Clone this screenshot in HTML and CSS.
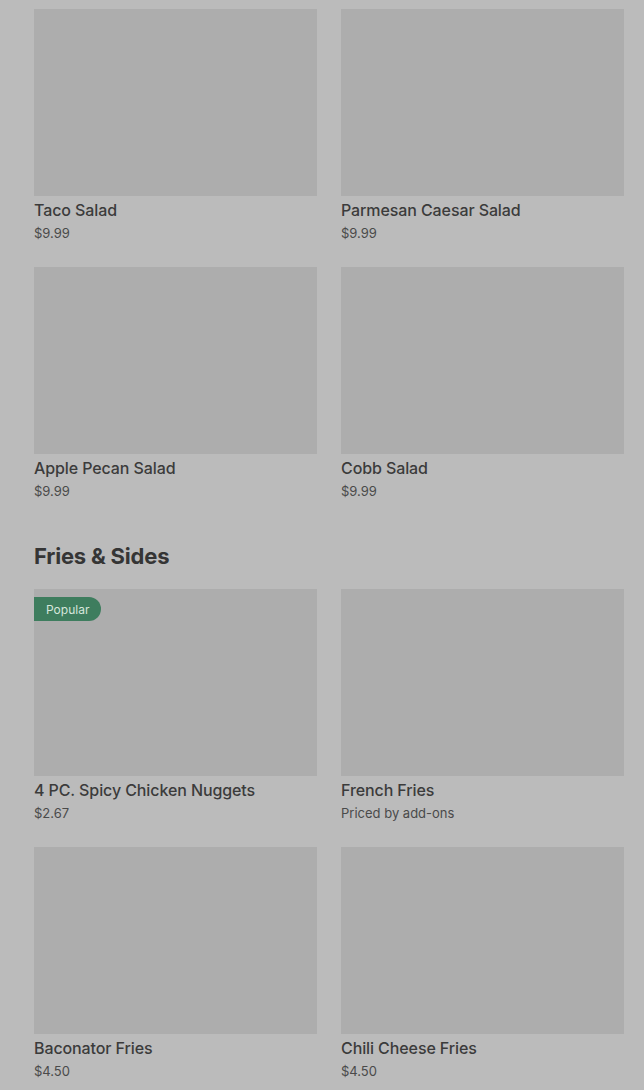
FILE: index.html
```html
<!DOCTYPE html>
<html lang="en">
  <head>
    <meta charset="UTF-8" />
    <meta name="viewport" content="width=device-width, initial-scale=1.0" />
    <title>Menu</title>
    <link rel="stylesheet" href="styles.css">
  </head>
  <body>
    <div class="menu">
      <div class="grid">
        <div class="item">
          <div class="thumb"></div>
          <div class="name">Taco Salad</div>
          <div class="price">$9.99</div>
        </div>
        <div class="item">
          <div class="thumb"></div>
          <div class="name">Parmesan Caesar Salad</div>
          <div class="price">$9.99</div>
        </div>
        <div class="item">
          <div class="thumb"></div>
          <div class="name">Apple Pecan Salad</div>
          <div class="price">$9.99</div>
        </div>
        <div class="item">
          <div class="thumb"></div>
          <div class="name">Cobb Salad</div>
          <div class="price">$9.99</div>
        </div>
      </div>

      <h2 class="section-title">Fries &amp; Sides</h2>

      <div class="grid">
        <div class="item">
          <div class="thumb">
            <span class="badge">Popular</span>
          </div>
          <div class="name">4 PC. Spicy Chicken Nuggets</div>
          <div class="price">$2.67</div>
        </div>
        <div class="item">
          <div class="thumb"></div>
          <div class="name">French Fries</div>
          <div class="price">Priced by add-ons</div>
        </div>
        <div class="item">
          <div class="thumb"></div>
          <div class="name">Baconator Fries</div>
          <div class="price">$4.50</div>
        </div>
        <div class="item">
          <div class="thumb"></div>
          <div class="name">Chili Cheese Fries</div>
          <div class="price">$4.50</div>
        </div>
      </div>
    </div>
  </body>
</html>
```

FILE: styles.css
```css
* {
  margin: 0;
  padding: 0;
  box-sizing: border-box;
}

body {
  background-color: #bbbbbb;
  font-family: Inter, "Noto Sans", sans-serif;
  color: #3a3a3a;
}

.menu {
  padding: 9px 20px 0 34px;
}

.grid {
  display: grid;
  grid-template-columns: 1fr 1fr;
  column-gap: 24px;
  row-gap: 25px;
}

.thumb {
  position: relative;
  height: 187px;
  background-color: #adadad;
}

.name {
  margin-top: 4px;
  font-size: 16px;
  line-height: 20px;
  font-weight: 500;
  letter-spacing: -0.1px;
  color: #3b3b3b;
}

.price {
  margin-top: 4px;
  font-size: 13px;
  line-height: 18px;
  color: #4a4a4a;
}

.section-title {
  margin-top: 42px;
  margin-bottom: 19px;
  font-size: 22px;
  line-height: 28px;
  font-weight: 700;
  letter-spacing: -0.2px;
  color: #353535;
}

.badge {
  position: absolute;
  top: 8px;
  left: 0;
  height: 24px;
  padding: 0 12px;
  display: flex;
  align-items: center;
  font-size: 12px;
  color: #d6e6dc;
  background-color: #3e7d5e;
  border-radius: 0 12px 12px 0;
}
```
